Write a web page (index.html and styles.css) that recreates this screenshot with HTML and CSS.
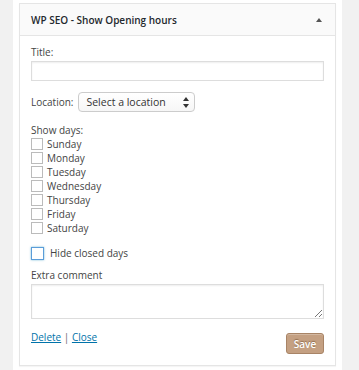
FILE: index.html
```html
<!DOCTYPE html>
<html lang="en">
<head>
    <meta charset="UTF-8">
    <title>WP SEO - Show Opening hours</title>
    <link rel="stylesheet" href="styles.css">
</head>
<body>
    <div class="sidebar">
        <div class="widget">
            <div class="widget-top">
                <h3>WP SEO - Show Opening hours</h3>
                <span class="toggle"></span>
            </div>
            <div class="widget-inside">
                <label class="field-label" for="title">Title:</label>
                <input type="text" id="title" class="wide">

                <div class="location-row">
                    <label for="location">Location:</label>
                    <div class="select">Select a location
                        <svg width="6" height="11" viewBox="0 0 6 11"><path d="M3 0 L6 4 H0 Z M3 11 L0 7 H6 Z" fill="#333"/></svg>
                    </div>
                </div>

                <div class="days">
                    <div class="days-title">Show days:</div>
                    <label class="day"><span class="box"></span>Sunday</label>
                    <label class="day"><span class="box"></span>Monday</label>
                    <label class="day"><span class="box"></span>Tuesday</label>
                    <label class="day"><span class="box"></span>Wednesday</label>
                    <label class="day"><span class="box"></span>Thursday</label>
                    <label class="day"><span class="box"></span>Friday</label>
                    <label class="day"><span class="box"></span>Saturday</label>
                </div>

                <label class="hide-closed"><span class="box focus"></span>Hide closed days</label>

                <label class="field-label" for="comment">Extra comment</label>
                <div class="textarea" id="comment">
                    <svg class="grip" width="8" height="8" viewBox="0 0 8 8"><path d="M8 1 L1 8 M8 5 L5 8" stroke="#777" stroke-width="1"/></svg>
                </div>

                <div class="widget-control">
                    <div class="links"><a href="#">Delete</a> | <a href="#">Close</a></div>
                    <button class="save">Save</button>
                </div>
            </div>
        </div>
    </div>
</body>
</html>
```

FILE: styles.css
```css
body {
    margin: 0;
    background-color: #f1f1f1;
    font-family: "Open Sans", "Noto Sans", sans-serif;
    font-size: 10px;
    color: #444;
}
.sidebar {
    margin: 0 17px 0 13px;
    padding: 3px 6px 6px;
    background-color: #fff;
    height: 361px;
}
.widget {
    border: 1px solid #e5e5e5;
    background-color: #fff;
    box-shadow: 0 1px 1px rgba(0, 0, 0, 0.04);
}
.widget-top {
    display: flex;
    justify-content: space-between;
    align-items: center;
    height: 31px;
    padding: 0 13px 0 11px;
    background-color: #fafafa;
    border-bottom: 1px solid #e5e5e5;
}
.widget-top h3 {
    margin: 0;
    font-size: 10px;
    font-weight: 600;
    color: #23282d;
}
.toggle {
    width: 0;
    height: 0;
    border-left: 3px solid transparent;
    border-right: 3px solid transparent;
    border-bottom: 4px solid #555;
}
.widget-inside {
    padding: 8px 11px 11px;
}
.field-label {
    display: block;
    line-height: 17px;
}
.wide {
    display: block;
    width: 100%;
    height: 20px;
    box-sizing: border-box;
    margin: 0;
    border: 1px solid #ddd;
    box-shadow: inset 0 1px 2px rgba(0, 0, 0, 0.07);
}
.location-row {
    display: flex;
    align-items: center;
    gap: 5px;
    margin-top: 11px;
}
.select {
    display: flex;
    align-items: center;
    justify-content: space-between;
    width: 117px;
    height: 20px;
    box-sizing: border-box;
    padding: 0 5px 0 7px;
    border: 1px solid #ccc;
    border-radius: 4px;
    background: linear-gradient(#fff, #f6f6f6);
    font-size: 10.5px;
    color: #333;
}
.days {
    margin-top: 11px;
    line-height: 14px;
}
.day {
    display: flex;
    align-items: center;
    gap: 4px;
}
.box {
    width: 12px;
    height: 12px;
    box-sizing: border-box;
    border: 1px solid #bbb;
    background-color: #fff;
}
.hide-closed {
    display: flex;
    align-items: center;
    gap: 6px;
    margin-top: 10px;
    line-height: 16px;
    margin-bottom: 6px;
}
.box.focus {
    width: 13px;
    height: 13px;
    border-color: #5b9dd9;
    box-shadow: 0 0 2px rgba(30, 140, 190, 0.6);
}
.textarea {
    position: relative;
    height: 33px;
    border: 1px solid #ddd;
    box-shadow: inset 0 1px 2px rgba(0, 0, 0, 0.07);
}
.grip {
    position: absolute;
    right: 1px;
    bottom: 1px;
}
.widget-control {
    display: flex;
    justify-content: space-between;
    align-items: flex-start;
    margin-top: 10px;
}
.links {
    line-height: 17px;
    color: #666;
}
.links a {
    color: #0073aa;
}
.save {
    margin-top: 4px;
    width: 38px;
    height: 21px;
    padding: 0;
    border: 1px solid #a88466;
    border-radius: 3px;
    background-color: #c4a082;
    color: #fff;
    font-family: "Open Sans", sans-serif;
    font-size: 10px;
    font-weight: 600;
    text-shadow: 0 -1px 1px #8f6c4e;
    box-shadow: inset 0 1px 0 rgba(255, 255, 255, 0.25);
}
```
